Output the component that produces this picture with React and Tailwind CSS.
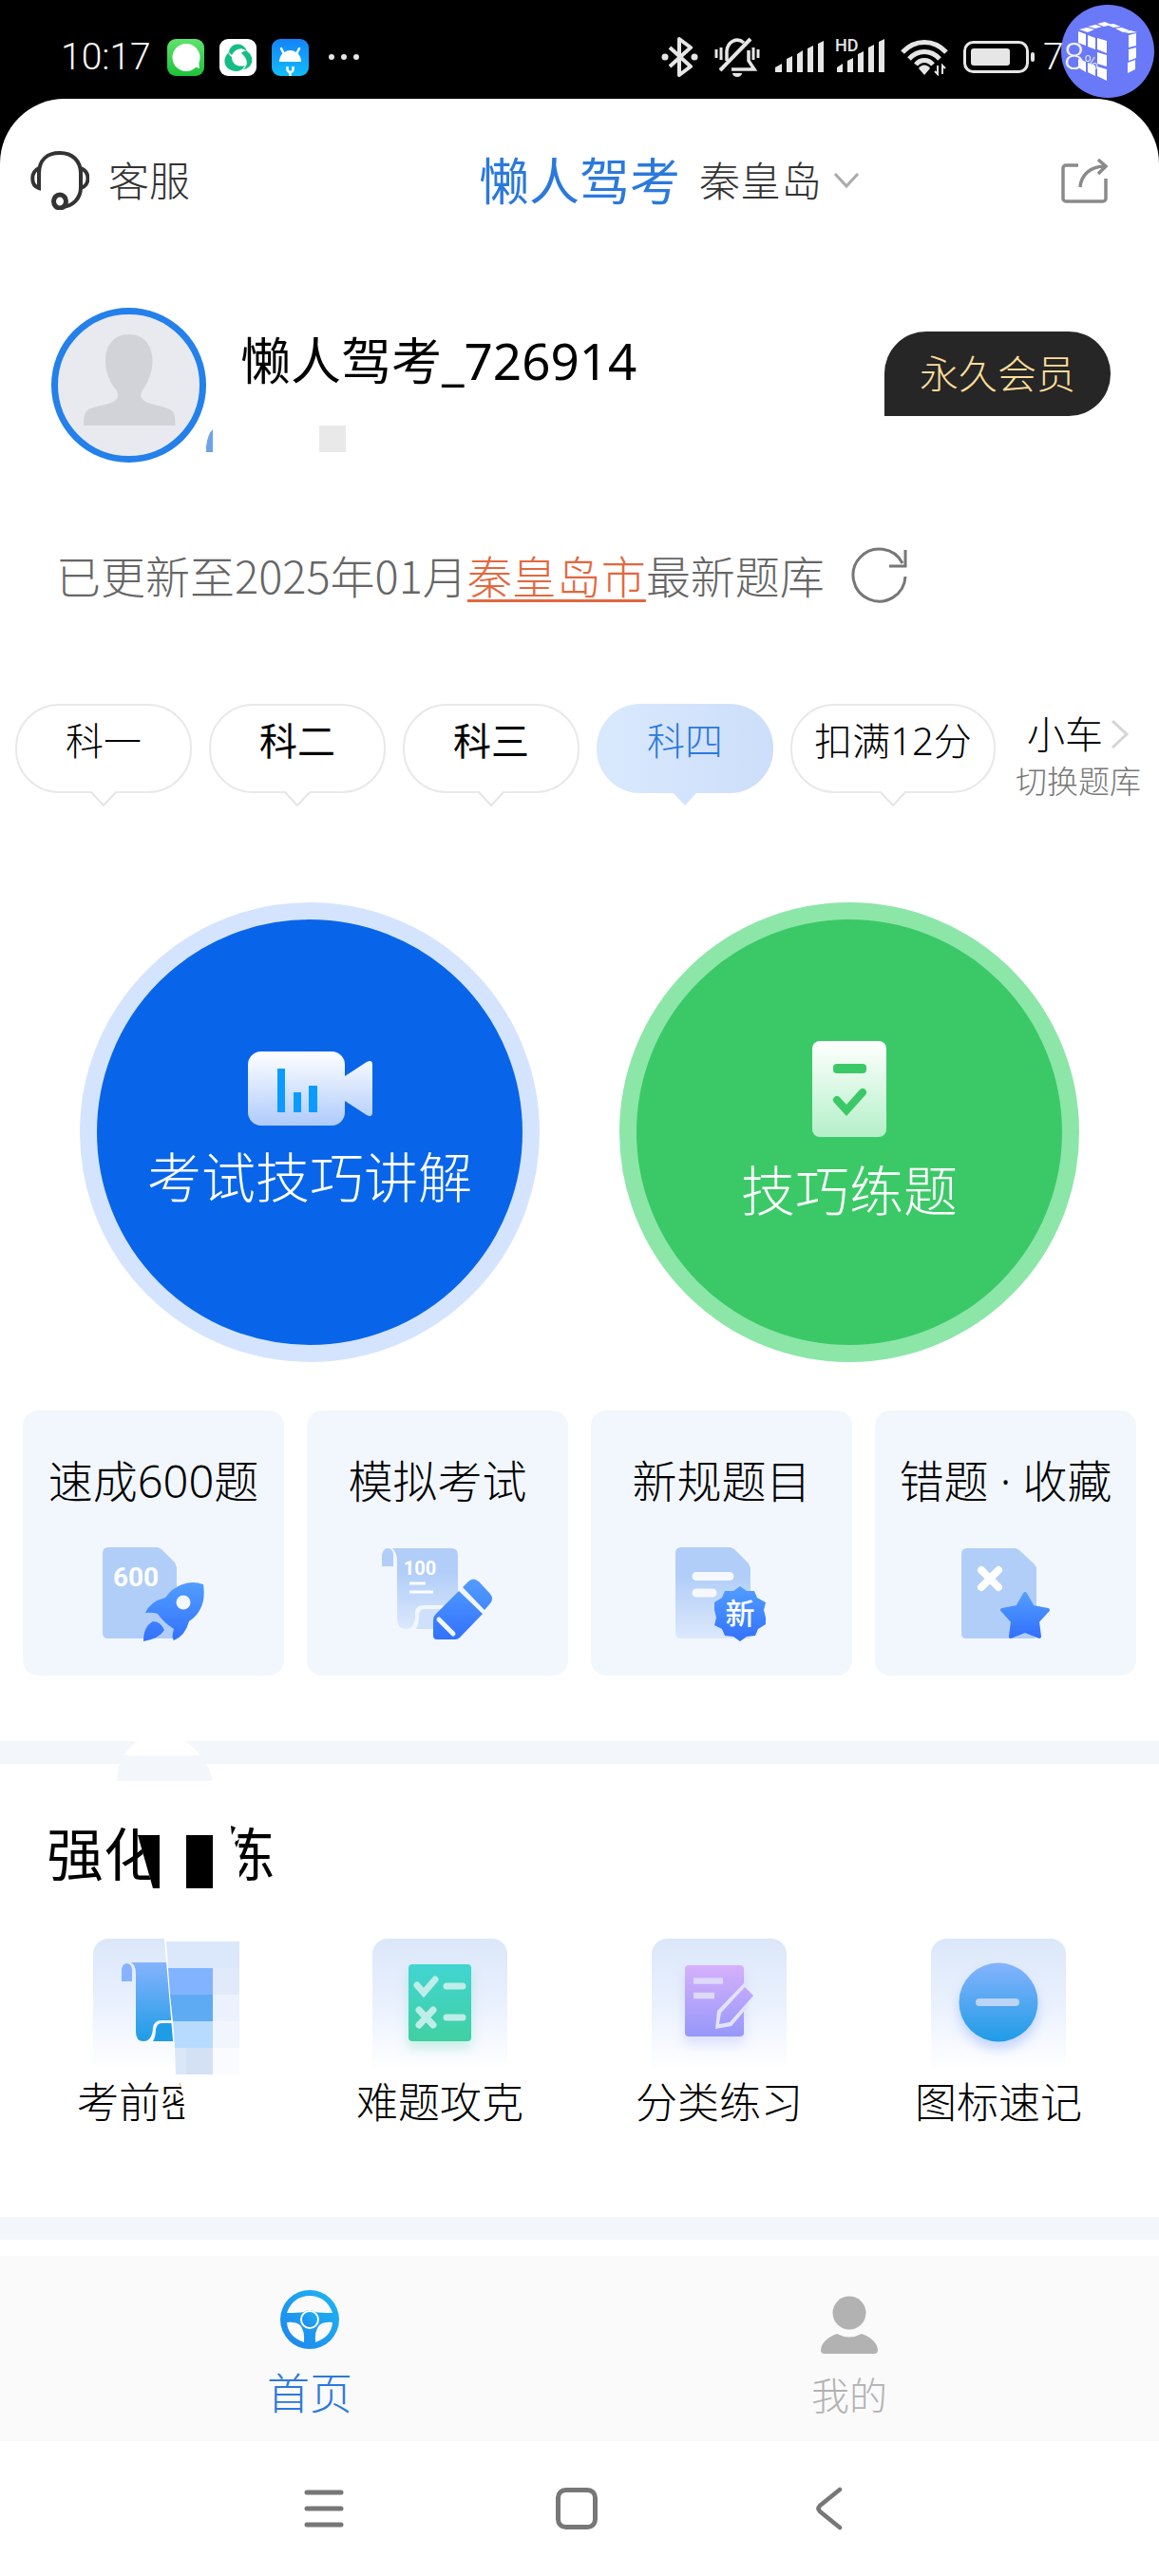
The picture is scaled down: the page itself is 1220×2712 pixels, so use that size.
const FONT = "font-['Noto_Sans','Noto_Sans_CJK_SC',sans-serif]";

function StatusBar() {
  return (
    <div className="relative flex h-[104px] items-center justify-between bg-black pl-16 pr-2.5 pt-4 text-white">
      <div className="flex items-center">
        <span className="w-28 font-['Roboto',sans-serif] text-[39px] leading-10 font-light">10:17</span>
        <svg width="39" height="39" viewBox="0 0 39 39" aria-hidden="true">
          <defs>
            <linearGradient id="msg" x1="0" y1="0" x2="0" y2="1">
              <stop offset="0" stopColor="#5ee36d" />
              <stop offset="1" stopColor="#1dc238" />
            </linearGradient>
          </defs>
          <rect width="39" height="39" rx="9" fill="url(#msg)" />
          <circle cx="20" cy="19.500" r="14.500" fill="#fff" />
          <path d="M28 29l6 2-1-8z" fill="#fff" />
        </svg>
        <svg className="ml-4" width="39" height="39" viewBox="0 0 39 39" aria-hidden="true">
          <rect width="39" height="39" rx="9" fill="#fff" />
          <g fill="#14bd83">
            <path d="M10 14C11 4 25 2 29 13C24 9 18 9 13 17z" />
            <path d="M29 13C38 19 35 31 25 32C30 28 31 22 23 15C26 12 28 12 29 13z" />
            <path d="M10 14C1 22 6 34 18 34C23 34 25 31 27 28C20 30 13 27 13 19C11 18 10 16 10 14z" />
          </g>
        </svg>
        <svg className="ml-4" width="39" height="39" viewBox="0 0 39 39" aria-hidden="true">
          <defs>
            <linearGradient id="droid" x1="0" y1="0" x2="0" y2="1">
              <stop offset="0" stopColor="#1482fb" />
              <stop offset="1" stopColor="#12bdfb" />
            </linearGradient>
          </defs>
          <rect width="39" height="39" rx="9" fill="url(#droid)" />
          <path d="M8 24a11.500 12 0 0 1 23 0z" fill="#fff" />
          <path d="M10 10l3 6M29 10l-3 6" stroke="#fff" strokeWidth="2.500" strokeLinecap="round" />
          <path d="M16.500 29v3a3 3 0 0 0 6 0v-3M19.500 34v5" stroke="#fff" strokeWidth="2.500" fill="none" />
        </svg>
        <svg className="ml-5" width="34" height="8" viewBox="0 0 34 8" fill="#e6e6e6" aria-hidden="true">
          <circle cx="4" cy="4" r="3" />
          <circle cx="17" cy="4" r="3" />
          <circle cx="30" cy="4" r="3" />
        </svg>
      </div>
      <svg className="absolute right-[5px] top-[5px]" width="98" height="98" viewBox="0 0 98 98" aria-hidden="true">
        <circle cx="49" cy="49" r="49" fill="#6a79f7" />
        <g fill="#fff">
          <path d="M18 28l8 3v12l-8-3zM28 32l8 3v12l-8-3zM38 35l10 3v13l-10-4zM38 50l10 3v12l-10-3zM38 65l10 3v12l-10-5zM28 61l8 3v11l-8-4zM18 57l8 3v11l-8-5z" />
          <path d="M19 26l8-2 8 2-7 3zM28 23l8-2 7 2-7 2zM38 20l8-2 7 3-8 2zM48 21l7-1 8 3-8 1zM57 25l7-1 8 3-7 2zM66 29l7-2 7 2-8 1z" />
          <path d="M71 32l8-2v13l-8 2zM71 47l8-2v11l-8 3zM70 61l8-3v10l-8 4z" />
        </g>
      </svg>
      <div className="relative flex items-center gap-4 pr-12">
        <svg width="40" height="42" viewBox="0 0 40 42" fill="none" stroke="#e6e6e6" strokeWidth="4" strokeLinejoin="round" aria-hidden="true">
          <path d="M9 11l22 20-12 9V2l12 9L9 31" />
          <circle cx="4" cy="21" r="3.500" fill="#e6e6e6" stroke="none" />
          <circle cx="35" cy="21" r="3.500" fill="#e6e6e6" stroke="none" />
        </svg>
        <svg width="48" height="42" viewBox="0 0 48 42" fill="none" stroke="#e6e6e6" strokeWidth="3.500" aria-hidden="true">
          <path d="M13 25V15C14 4 24 0 31 6M36 14v11l6 9H18" />
          <path d="M6 35L38 2" strokeWidth="4" />
          <path d="M2 13v9M7 11v13M41 11v13M46 13v9" strokeWidth="3" />
          <path d="M19 38h10a5 4 0 0 1-10 0z" fill="#e6e6e6" stroke="none" />
        </svg>
        <svg width="52" height="34" viewBox="0 0 52 34" fill="#e6e6e6" aria-hidden="true">
          <path d="M0 28l7-4v9H0zM12 19l6-3v17h-6zM23 14l6-4v23h-6zM34 8l6-3v28h-6zM45 3l6-3v33h-6z" />
        </svg>
        <svg className="-ml-1.5" width="54" height="50" viewBox="0 -4 54 50" fill="#e6e6e6" aria-hidden="true">
          <text x="1" y="15" fontSize="18" fontWeight="500" fontFamily="Roboto, sans-serif">HD</text>
          <path d="M3 32l6-4v9H3zM14 25l6-3v15h-6zM25 18l6-3v22h-6zM36 11l6-3v29h-6zM47 5l6-3v35h-6z" />
        </svg>
        <svg width="50" height="40" viewBox="0 0 50 40" fill="none" stroke="#e6e6e6" strokeWidth="5" aria-hidden="true">
          <path d="M2 15C15 1 35 1 48 15M9 22C18 12 32 12 41 22M16 28C21 22 29 22 34 28" />
          <path d="M19 32a7 7 0 0 1 12 0l-6 7z" fill="#e6e6e6" stroke="none" />
          <path d="M39 29v9l-3-3M44 38v-9l3 3" strokeWidth="2" />
        </svg>
        <svg width="76" height="34" viewBox="0 0 76 34" fill="none" aria-hidden="true">
          <rect x="1.500" y="1.500" width="66" height="31" rx="9" stroke="#e6e6e6" strokeWidth="3" />
          <rect x="8" y="8" width="41" height="18" rx="3" fill="#e6e6e6" />
          <rect x="71" y="12" width="4" height="10" rx="2" fill="#e6e6e6" />
        </svg>
        <span className="w-16 -ml-2 font-['Roboto',sans-serif] text-[39px] leading-10 font-light text-gray-100">
          78<span className="text-xl">%</span>
        </span>
      </div>
    </div>
  );
}

function Header() {
  return (
    <header className="grid h-[172px] grid-cols-[1fr_auto_1fr] items-center px-8 text-[43px] leading-none text-[#333]">
      <button className="flex items-center gap-5 justify-self-start font-light">
        <svg width="62" height="62" viewBox="0 0 62 62" fill="none" stroke="#333" strokeWidth="4" aria-hidden="true">
          <path d="M9 38V24C9 9 18 2 31 2s22 8 22 22v14c0 12-8 20-20 21" />
          <path d="M9 18C0 22 0 36 9 39zM53 18c10 4 10 18 0 21z" />
          <ellipse cx="31" cy="53" rx="6.500" ry="7" strokeWidth="5" />
        </svg>
        客服
      </button>
      <h1 className="text-[53px] leading-none text-[#2b79dc]">懒人驾考</h1>
      <div className="flex items-center justify-between pl-5 pr-5">
        <button className="flex items-center gap-3 font-light">
          秦皇岛
          <svg width="28" height="18" viewBox="0 0 28 18" fill="none" stroke="#aaa" strokeWidth="3" aria-hidden="true">
            <path d="M2 2l12 13L26 2" />
          </svg>
        </button>
        <button aria-label="分享">
          <svg width="52" height="48" viewBox="0 0 52 48" fill="none" stroke="#8a8a8a" strokeWidth="3.500" aria-hidden="true">
            <path d="M19 8H6a3 3 0 0 0-3 3v32a3 3 0 0 0 3 3h39a3 3 0 0 0 3-3V22" />
            <path d="M21 31C22 18 32 9 47 9M40 2l8 7-8 8" />
          </svg>
        </button>
      </div>
    </header>
  );
}

function Profile() {
  return (
    <section className="relative flex items-center pl-[54px] pr-[51px] pt-12">
      <svg width="163" height="163" viewBox="0 0 163 163" className="shrink-0" role="img" aria-label="头像">
        <circle cx="81.500" cy="81.500" r="78" fill="#e8eaf0" stroke="#2480ea" strokeWidth="7" />
        <path
          fill="#d2d3d9"
          d="M81.500 28c16 0 25 11 25 28 0 13-5 23-10 30-3 5-3 8 0 11 6 6 26 6 31 12 3 4 3 10 3 15H34c0-5 0-11 3-15 5-6 25-6 31-12 3-3 3-6 0-11-6-7-11-17-11-30 0-17 9-28 24.500-28z"
        />
      </svg>
      <svg className="absolute left-[217px] top-[172px]" width="148" height="30" viewBox="0 0 148 30" aria-hidden="true">
        <path d="M0 28V22Q2 8 7 4V28z" fill="#6ea3e8" />
        <rect x="119" width="28" height="28" fill="#e9e9e9" />
      </svg>
      <h2 className="ml-9 flex-1 pb-[52px] text-[53px] leading-none text-black">懒人驾考_726914</h2>
      <button className="mb-6 h-[89px] rounded-[44px] rounded-bl-none bg-[#262626] px-[37px] text-[41px] font-light text-[#fddd9a]">
        永久会员
      </button>
    </section>
  );
}

function UpdateRow() {
  return (
    <p className="mt-22 flex h-[60px] items-center pl-[59px] font-['Noto_Sans_CJK_SC',sans-serif] text-[47px] leading-[60px] font-light text-[#666]">
      已更新至2025年01月
      <a href="#city" className="text-[#e2673e] underline decoration-[3px] underline-offset-[6px]">秦皇岛市</a>
      最新题库
      <button className="ml-7" aria-label="刷新">
        <svg width="60" height="60" viewBox="0 0 60 60" fill="none" stroke="#777" strokeWidth="3" aria-hidden="true">
          <path d="M57 32A27.500 27.500 0 1 1 54 18" />
          <path d="M57 4v17H40" />
        </svg>
      </button>
    </p>
  );
}

const subjects = [
  { name: "科一", weight: "font-light" },
  { name: "科二", weight: "font-normal" },
  { name: "科三", weight: "font-normal" },
  { name: "科四", weight: "font-light", active: true },
  { name: "扣满12分", weight: "font-light", wide: true },
];

function Subjects() {
  return (
    <nav className="mt-[106px] flex gap-[18px] pl-4 pr-4 text-[40px] leading-none text-black">
      {subjects.map((s) => (
        <button key={s.name} className={`flex flex-col items-center ${s.wide ? "w-[216px]" : "w-[186px]"}`}>
          <span
            className={`flex h-[94px] w-full items-center justify-center rounded-[46px] pb-4 ${s.weight} ${
              s.active
                ? "bg-linear-to-r from-[#d9e9fd] to-[#cddefa] text-[#2b79dc]"
                : "border-2 border-[#e9e9e9] bg-white"
            }`}
          >
            {s.name}
          </span>
          <svg className="relative -mt-0.5" width="28" height="16" viewBox="0 0 28 16" aria-hidden="true">
            <path
              d="M0 0L14 15L28 0"
              fill={s.active ? "#d2e4fc" : "#fff"}
              stroke={s.active ? "none" : "#e5e5e5"}
              strokeWidth="2"
            />
          </svg>
        </button>
      ))}
      <button className="flex flex-1 flex-col items-center gap-3 pt-3 font-light">
        <span className="flex items-center gap-2">
          小车
          <svg width="20" height="32" viewBox="0 0 20 32" fill="none" stroke="#d5d5d5" strokeWidth="3" aria-hidden="true">
            <path d="M2 2l15 14L2 30" />
          </svg>
        </span>
        <span className="text-[33px] leading-9 whitespace-nowrap text-[#777]">切换题库</span>
      </button>
    </nav>
  );
}

function MainActions() {
  return (
    <section className="mt-[101px] grid grid-cols-2 justify-items-center px-[42px] text-[57px] leading-[60px] font-light text-white">
      <button className="flex size-[484px] flex-col items-center rounded-full border-18 border-[#d5e4fe] bg-[#0865ea] pt-[139px]">
        <svg width="131" height="78" viewBox="0 0 131 78" aria-hidden="true">
          <defs>
            <linearGradient id="cam" x1="0" y1="0" x2="0" y2="1">
              <stop offset="0" stopColor="#fff" />
              <stop offset="1" stopColor="#aecbfb" />
            </linearGradient>
          </defs>
          <path
            fill="url(#cam)"
            d="M14 0H88A14 14 0 0 1 102 14V26L125 11Q131 8 131 14V64Q131 70 125 67L102 52V64A14 14 0 0 1 88 78H14A14 14 0 0 1 0 64V14A14 14 0 0 1 14 0z"
          />
          <path d="M31 18h8v46h-8zM48 43h8v21h-8zM64 36h9v28h-9z" fill="#0b9bff" />
        </svg>
        <span className="mt-6">考试技巧讲解</span>
      </button>
      <button className="flex size-[484px] flex-col items-center rounded-full border-18 border-[#8ce6a8] bg-[#3bc967] pt-32">
        <svg width="78" height="101" viewBox="0 0 78 101" aria-hidden="true">
          <defs>
            <linearGradient id="sheet" x1="0" y1="0" x2="0" y2="1">
              <stop offset="0" stopColor="#fff" />
              <stop offset="1" stopColor="#b4f0c8" />
            </linearGradient>
          </defs>
          <rect width="78" height="101" rx="8" fill="url(#sheet)" />
          <rect x="22" y="24" width="35" height="10" rx="4" fill="#3bc967" />
          <path d="M26 62l10 11 17-19" fill="none" stroke="#3bc967" strokeWidth="8" strokeLinecap="round" />
        </svg>
        <span className="mt-[26px]">技巧练题</span>
      </button>
    </section>
  );
}

function BlueGradients() {
  return (
    <svg width="0" height="0" className="absolute" aria-hidden="true">
      <defs>
        <linearGradient id="deep" x1="0" y1="0" x2="0" y2="1">
          <stop offset="0" stopColor="#519dff" />
          <stop offset="1" stopColor="#3371fd" />
        </linearGradient>
        <linearGradient id="pale" x1="0" y1="0" x2="0" y2="1">
          <stop offset="0.300" stopColor="#b1cef8" />
          <stop offset="1" stopColor="#dce8fc" />
        </linearGradient>
        <linearGradient id="sky" x1="0" y1="0" x2="0" y2="1">
          <stop offset="0" stopColor="#86b3fd" />
          <stop offset="1" stopColor="#1f9ce6" />
        </linearGradient>
      </defs>
    </svg>
  );
}

function RocketIcon() {
  return (
    <svg width="108" height="100" viewBox="0 0 108 100" aria-hidden="true">
      <path d="M6 0H58L62 2L76 16L78 21V92Q78 96 74 96H6Q0 96 0 90V6Q0 0 6 0z" fill="#b1cef8" />
      <text x="35" y="41" textAnchor="middle" fontSize="28" fontWeight="700" fill="#fff" fontFamily="Roboto, sans-serif">600</text>
      <path
        fill="url(#deep)"
        d="M106 39Q95 35 84 39Q73 43 66 53Q50 57 45 69Q52 68 58 70Q64 79 75 86Q72 95 75 98Q87 93 91 78Q110 65 106 39zM43 99Q43 83 53 78Q61 78 65 87Q60 96 43 99z"
      />
      <circle cx="85" cy="58" r="7.500" fill="#f3f8ff" />
    </svg>
  );
}

function ExamIcon() {
  return (
    <svg width="118" height="100" viewBox="0 0 118 100" aria-hidden="true">
      <path d="M0 20V8Q1 1 6 1Q12 1 12 9V20z" fill="#b1cef8" />
      <path d="M11 1H73Q80 1 80 8V61H44Q36 61 35 68V74Q34 86 25 86Q16 86 16 74V14Q16 6 11 1z" fill="url(#pale)" />
      <path d="M36 86Q39 81 39 72Q39 65 44 65H66V86z" fill="#cfe0fb" />
      <text x="40" y="29" textAnchor="middle" fontSize="20" fontWeight="700" fill="#fff" fontFamily="Roboto, sans-serif">100</text>
      <path d="M29 38h17M29 47h25" stroke="#fff" strokeWidth="3" />
      <path d="M81 46L106 70L82 95Q80 97 77 97H58Q54 97 54 93V76Q54 73 57 70zM85 42L91 36Q96 31 102 36L114 49Q118 54 114 59L108 66z" fill="url(#deep)" />
      <path d="M60 76L75 91" stroke="#eef5ff" strokeWidth="5" strokeLinecap="round" />
    </svg>
  );
}

function NewRuleIcon() {
  return (
    <svg width="98" height="100" viewBox="0 0 98 100" aria-hidden="true">
      <path d="M6 0H58L62 2L77 17L79 22V96H6Q0 96 0 90V6Q0 0 6 0z" fill="url(#pale)" />
      <path d="M22 30.500H57M22 48H39" stroke="#f5f9ff" strokeWidth="9" strokeLinecap="round" />
      <path
        fill="url(#deep)"
        d="M68 41L75 46L83 46L86 53L95 58L93 66L95 74L95 81L87 86L84 93L75 94L68 99L61 94L52 93L49 86L41 82L43 74L41 66L41 58L49 53L52 46L61 46z"
      />
      <text x="68" y="81" textAnchor="middle" fontSize="31" fontWeight="500" fill="#fff" fontFamily="'Noto Sans CJK SC', sans-serif">新</text>
    </svg>
  );
}

function WrongIcon() {
  return (
    <svg width="94" height="98" viewBox="0 0 94 98" aria-hidden="true">
      <path d="M6 1H57L61 3L76 17L79 21V92Q79 96 75 96H5Q0 96 0 91V7Q0 1 6 1z" fill="#b1cef8" />
      <path d="M21 24l18 18M39 24L21 42" stroke="#fff" strokeWidth="8" strokeLinecap="round" />
      <path
        fill="url(#deep)"
        stroke="url(#deep)"
        strokeWidth="4"
        strokeLinejoin="round"
        d="M67 49L75 63L91 66L80 78L82 94L67 88L52 94L54 78L43 66L59 63z"
      />
    </svg>
  );
}

const cards = [
  { name: "速成600题", Icon: RocketIcon },
  { name: "模拟考试", Icon: ExamIcon },
  { name: "新规题目", Icon: NewRuleIcon },
  { name: "错题 · 收藏", Icon: WrongIcon },
];

function Cards() {
  return (
    <section className="mt-[51px] mb-[69px] grid grid-cols-4 gap-6 px-6">
      {cards.map(({ name, Icon }) => (
        <button
          key={name}
          className="flex h-[279px] flex-col items-center rounded-2xl bg-[#f2f7fe] pt-11 text-[47px] leading-[60px] font-light whitespace-nowrap text-black"
        >
          {name}
          <span className="mt-10">
            <Icon />
          </span>
        </button>
      ))}
    </section>
  );
}

function ScrollTile() {
  return (
    <svg width="142" height="139" viewBox="0 0 142 139" aria-hidden="true">
      <path d="M30 45V32Q31 26 36 26Q41 27 41 34V45z" fill="#86b3fd" />
      <path d="M40 25H106V86H72Q64 86 63 94Q62 108 53 108Q45 108 45 98V36Q45 28 40 25z" fill="url(#sky)" />
      <path d="M63 108Q66 103 66 96Q67 89 72 89H92V108z" fill="#1f9ce6" />
    </svg>
  );
}

function HardTile() {
  return (
    <svg width="142" height="139" viewBox="0 0 142 139" aria-hidden="true">
      <defs>
        <linearGradient id="teal" x1="0" y1="0" x2="0" y2="1">
          <stop offset="0" stopColor="#41d5d2" />
          <stop offset="1" stopColor="#40d0a2" />
        </linearGradient>
      </defs>
      <rect x="38" y="27" width="66" height="81" rx="4" fill="url(#teal)" className="drop-shadow-[0_8px_6px_#40d0a240]" />
      <g fill="none" stroke="#bfede9" strokeWidth="7" strokeLinecap="round">
        <path d="M47 49l7 8 12-14M78 50h17M78 83h17" />
        <path d="M49 75l15 16M64 75L49 91" />
      </g>
    </svg>
  );
}

function SortTile() {
  return (
    <svg width="142" height="139" viewBox="0 0 142 139" aria-hidden="true">
      <defs>
        <linearGradient id="violet" gradientUnits="userSpaceOnUse" x1="0" y1="28" x2="0" y2="103">
          <stop offset="0" stopColor="#d6b0fb" />
          <stop offset="1" stopColor="#9698fa" />
        </linearGradient>
      </defs>
      <rect x="35" y="28" width="62" height="75" rx="4" fill="url(#violet)" className="drop-shadow-[0_8px_6px_#9698fa40]" />
      <path d="M44 44.500h31M44 60h22" stroke="#dcd9fb" strokeWidth="6.500" />
      <path d="M97 47L69 76L67 95L84 92L101 72z" fill="#e3e2fd" />
      <path d="M98 51L107 60L82 88L71 90L73 78z" fill="url(#violet)" />
    </svg>
  );
}

function SignTile() {
  return (
    <svg width="142" height="139" viewBox="0 0 142 139" aria-hidden="true">
      <circle cx="71" cy="67" r="41.500" fill="url(#sky)" className="drop-shadow-[0_8px_6px_#3371fd40]" />
      <path d="M51 67h38" stroke="#bcd4f5" strokeWidth="8" strokeLinecap="round" />
    </svg>
  );
}

const drills = [
  { name: "考前密", label: "考前密卷", Tile: ScrollTile },
  { name: "难题攻克", Tile: HardTile },
  { name: "分类练习", Tile: SortTile },
  { name: "图标速记", Tile: SignTile },
];

function Drills() {
  return (
    <section className="relative px-[22px] pt-[65px] pb-[88px]">
      <svg className="absolute left-[120px] top-[-31px]" width="108" height="50" viewBox="0 0 108 50" aria-hidden="true">
        <path d="M10 22Q28 -2 50 0Q74 0 91 22z" fill="#fff" />
        <path d="M10 22H91Q101 34 104 49H3Q3 34 10 22z" fill="#f3f6fa" />
      </svg>
      <h2 className="pl-[27px] text-[60px] leading-[60px] text-black">强化训练</h2>
      <svg className="absolute left-[140px] top-[60px]" width="112" height="80" viewBox="140 1917 112 80" aria-hidden="true">
        <path d="M145 1932L161 1988L168 1997H252V1964L250 1960L251 1946L247 1936L242 1917H168V1932z" fill="#fff" />
        <path d="M145 1932H168V1988H161z" fill="#000" />
        <path d="M196 1932H224V1988H196z" fill="#000" />
        <path d="M243 1922l5 2-4 8zM247 1940l5-4-3 9z" fill="#000" />
      </svg>
      <div className="mt-[59px] grid grid-cols-4">
        {drills.map(({ name, label, Tile }) => (
          <button
            key={name}
            aria-label={label}
            className="flex flex-col items-center text-[44px] leading-[66px] font-light text-black"
          >
            <span className="rounded-t-2xl bg-linear-to-b from-[#dbe7f9] via-[#eaf1fe] to-white">
              <Tile />
            </span>
            <span className={label ? "w-44 text-left" : ""}>{name}</span>
          </button>
        ))}
      </div>
      <svg className="absolute left-[170px] top-[184px]" width="84" height="206" viewBox="170 2041 84 206" aria-hidden="true">
        <path d="M173 2041H254V2184H252V2247H194Q196 2200 185 2184z" fill="#fff" />
        <path d="M175 2044H252V2072H177z" fill="#dbe7fb" />
        <path d="M177 2072H224V2100H179z" fill="#82b3ff" />
        <path d="M179 2100H224V2128H182z" fill="#5eabf4" />
        <path d="M182 2128H224V2156H184z" fill="#b7dbff" />
        <path d="M184 2156H196V2184H185z" fill="#dbe7f9" />
        <path d="M196 2156H224V2184H196z" fill="#d4e1f5" />
        <path d="M224 2072H252V2100H224z" fill="#e1eafa" />
        <path d="M224 2100H252V2128H224z" fill="#ebf2fe" />
        <path d="M224 2128H252V2156H224z" fill="#f0f5fe" />
        <path d="M224 2156H252V2184H224z" fill="#f9fbff" />
      </svg>
    </section>
  );
}

function TabBar() {
  return (
    <nav className="mt-[17px] grid h-[195px] grid-cols-2 bg-[#fafafa] px-[42px] font-light">
      <button className="flex flex-col items-center pt-9 text-[45px] leading-[60px] text-[#2b79dc]">
        <svg width="62" height="62" viewBox="0 0 62 62" aria-hidden="true">
          <defs>
            <linearGradient id="wheel" x1="1" y1="0" x2="0" y2="1">
              <stop offset="0" stopColor="#1cb7f3" />
              <stop offset="1" stopColor="#2083ec" />
            </linearGradient>
          </defs>
          <path
            fill="url(#wheel)"
            fillRule="evenodd"
            d="M31 0a31 31 0 1 1 0 62a31 31 0 1 1 0-62zM7 24Q20 24 25 23Q31 19 37 23Q42 24 55 24C51 12 42 6 31 6S11 12 7 24zM7 34Q8 49 25 55Q26 43 21 37Q16 33 7 34zM55 34Q54 49 37 55Q36 43 41 37Q46 33 55 34z"
          />
          <circle cx="31" cy="31" r="9" fill="url(#wheel)" stroke="#fff" strokeWidth="2" />
        </svg>
        <span className="mt-[17px]">首页</span>
      </button>
      <button className="flex flex-col items-center pt-[42px] text-[40px] leading-[60px] text-[#b2b2b2]">
        <svg width="62" height="62" viewBox="0 0 62 62" fill="#b2b2b2" aria-hidden="true">
          <circle cx="31" cy="18" r="17.500" />
          <path d="M18 40Q31 47 44 40Q60 46 61 57Q61 61 57 61H5Q1 61 1 57Q2 46 18 40z" />
        </svg>
        <span className="mt-[13px]">我的</span>
      </button>
    </nav>
  );
}

function SystemNav() {
  return (
    <div className="grid h-[142px] grid-cols-3 place-items-center bg-white pl-52 pr-[214px]">
      <button aria-label="菜单">
        <svg width="42" height="42" viewBox="0 0 42 42" stroke="#777" strokeWidth="5" strokeLinecap="round" aria-hidden="true">
          <path d="M3 4h36M3 21h36M3 38h36" />
        </svg>
      </button>
      <button aria-label="主页">
        <svg width="44" height="44" viewBox="0 0 44 44" fill="none" stroke="#777" strokeWidth="5" aria-hidden="true">
          <rect x="2.500" y="2.500" width="39" height="39" rx="8" />
        </svg>
      </button>
      <button aria-label="返回">
        <svg width="30" height="46" viewBox="0 0 30 46" fill="none" stroke="#777" strokeWidth="4.500" strokeLinecap="round" aria-hidden="true">
          <path d="M26 3L5 20Q2 23 5 26L26 43" />
        </svg>
      </button>
    </div>
  );
}

export default function App() {
  return (
    <div className={`relative min-h-screen bg-black ${FONT}`}>
      <BlueGradients />
      <StatusBar />
      <main className="rounded-t-[68px] bg-white">
        <Header />
        <Profile />
        <UpdateRow />
        <Subjects />
        <MainActions />
        <Cards />
        <div className="h-6 bg-[#f3f6fa]" />
        <Drills />
        <div className="h-6 bg-[#f3f6fa]" />
        <TabBar />
        <SystemNav />
      </main>
    </div>
  );
}
